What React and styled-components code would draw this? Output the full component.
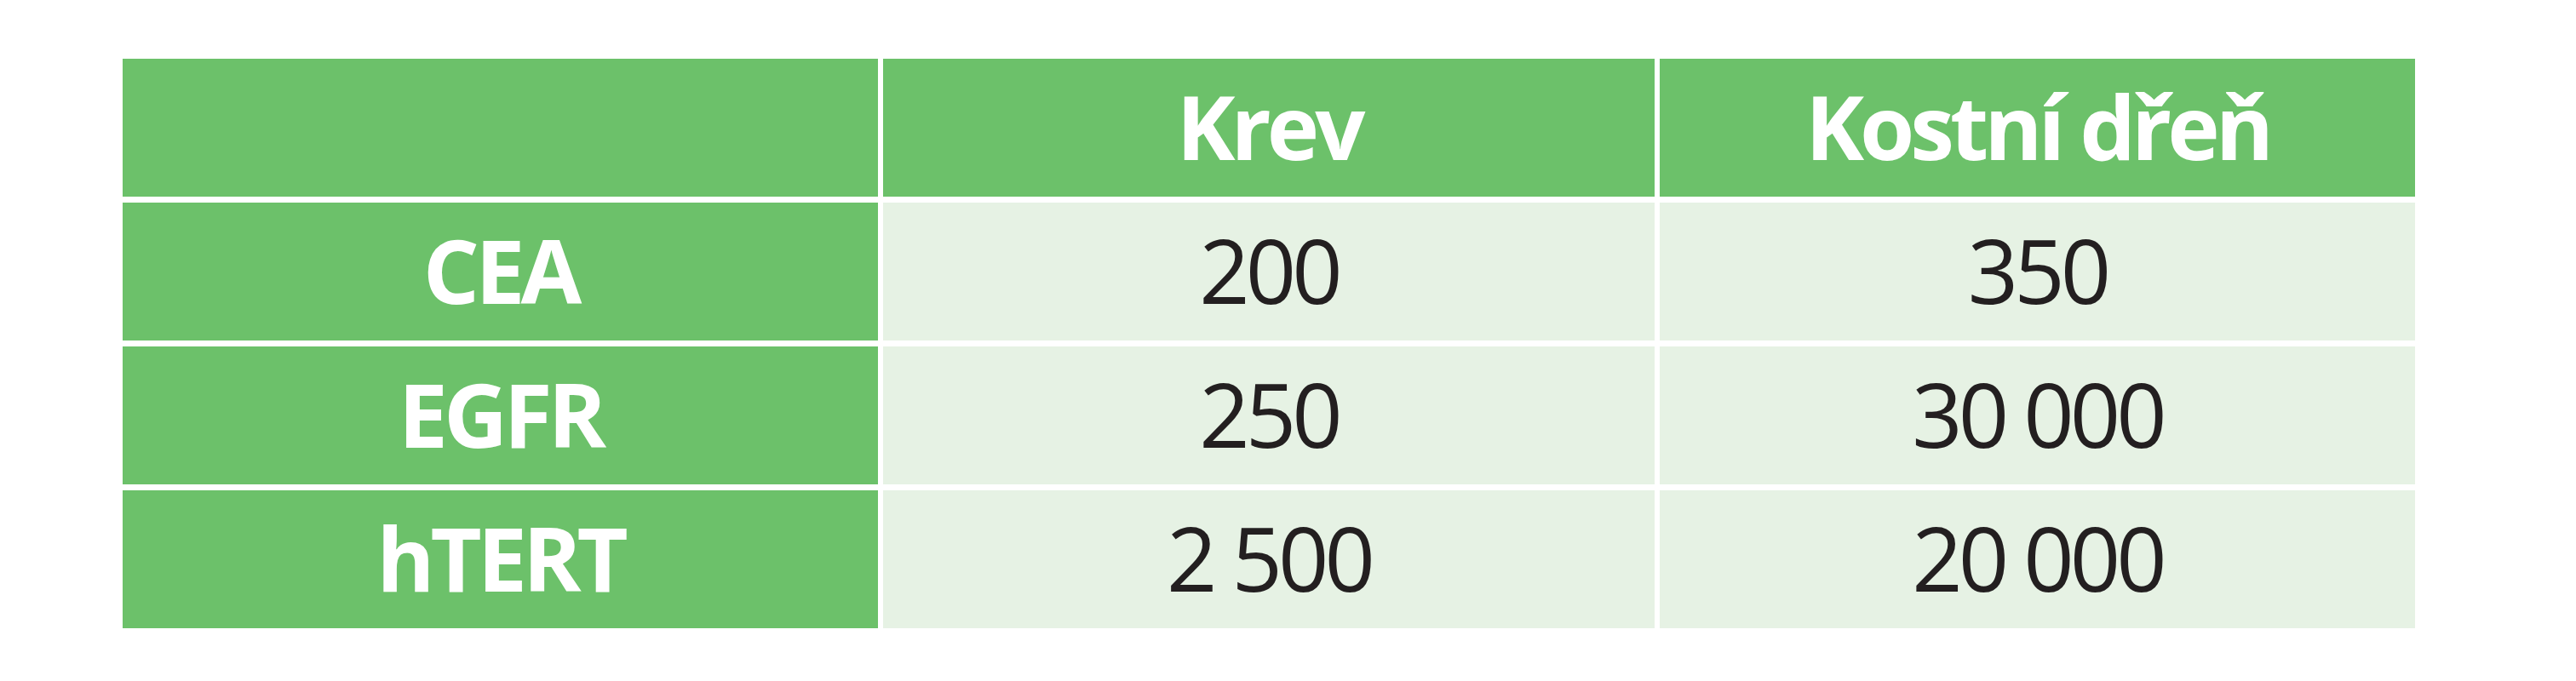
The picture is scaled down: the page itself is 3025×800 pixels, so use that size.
import React from "react";
import styled, { createGlobalStyle } from "styled-components";

const GlobalStyle = createGlobalStyle`
  html, body {
    margin: 0;
    padding: 0;
    background: #ffffff;
  }
`;

const rows = [
  { label: "CEA", blood: "200", marrow: "350" },
  { label: "EGFR", blood: "250", marrow: "30 000" },
  { label: "hTERT", blood: "2 500", marrow: "20 000" },
];

const App = () => {
  return (
    <>
      <GlobalStyle />
      <Page>
        <Table>
          <Cell $tone="head" />
          <Cell $tone="head">Krev</Cell>
          <Cell $tone="head">Kostní dřeň</Cell>
          {rows.map((row) => (
            <React.Fragment key={row.label}>
              <Cell $tone="head">{row.label}</Cell>
              <Cell>{row.blood}</Cell>
              <Cell>{row.marrow}</Cell>
            </React.Fragment>
          ))}
        </Table>
      </Page>
    </>
  );
};

export default App;

const Page = styled.div`
  width: 3025px;
  height: 800px;
  padding: 69px 0 0 144px;
  box-sizing: border-box;
  background: #ffffff;
  font-family: "Open Sans", "Noto Sans", sans-serif;
`;

const Table = styled.div`
  display: grid;
  grid-template-columns: 887px 906px 887px;
  grid-auto-rows: 162px;
  column-gap: 6px;
  row-gap: 7px;
`;

const Cell = styled.div`
  display: flex;
  align-items: center;
  justify-content: center;
  background: ${(p) => (p.$tone === "head" ? "#6cc16a" : "#e6f2e4")};
  color: ${(p) => (p.$tone === "head" ? "#ffffff" : "#231f20")};
  font-size: 104px;
  font-weight: ${(p) => (p.$tone === "head" ? 700 : 400)};
  letter-spacing: ${(p) => (p.$tone === "head" ? "-5px" : "-5px")};
  line-height: 1;
  padding-bottom: 4px;
  box-sizing: border-box;
`;
